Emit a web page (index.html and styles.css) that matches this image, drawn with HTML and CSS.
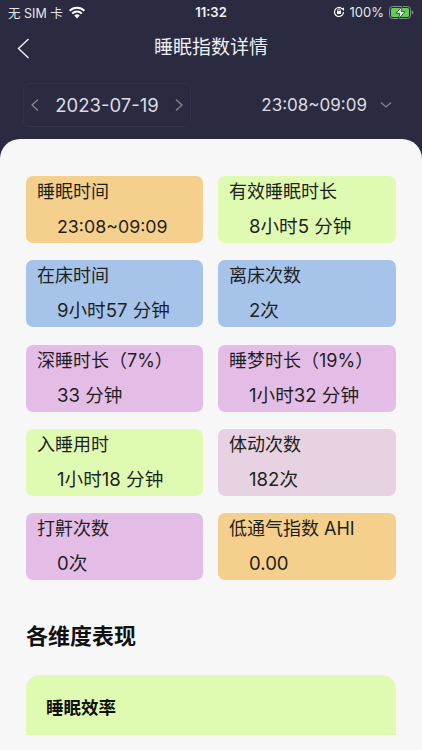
FILE: index.html
```html
<!DOCTYPE html>
<html lang="zh">
<head>
<meta charset="utf-8">
<title>睡眠指数详情</title>
<link rel="stylesheet" href="styles.css">
</head>
<body>
<div class="screen">
  <header class="top">
    <div class="status">
      <div class="status-left">
        <span>无 SIM 卡</span>
        <svg class="wifi" width="18" height="13" viewBox="0 0 18 13"><path d="M9 12.600 6.300 9.600a3.800 3.800 0 0 1 5.400 0Z" fill="#fff"/><path d="M4.200 7.600a6.800 6.800 0 0 1 9.600 0M1.600 4.800a10.500 10.500 0 0 1 14.800 0" fill="none" stroke="#fff" stroke-width="2"/></svg>
      </div>
      <span class="clock">11:32</span>
      <div class="status-right">
        <svg width="12" height="12" viewBox="0 0 12 12"><path d="M10.500 6a4.500 4.500 0 1 1-1.300-3.200" fill="none" stroke="#fff" stroke-width="1.200"/><path d="M8.200 2.800 11 1.500V5Z" fill="#fff"/><rect x="4" y="5" width="4" height="3" fill="#fff"/><path d="M4.800 5V4a1.200 1.200 0 0 1 2.400 0v1" fill="none" stroke="#fff" stroke-width=".8"/></svg>
        <span>100%</span>
        <svg width="25" height="13" viewBox="0 0 25 13"><rect x=".5" y=".5" width="21" height="12" rx="3" fill="none" stroke="#8a8b92"/><rect x="2" y="2" width="18" height="9" rx="1.500" fill="#5ed44e"/><path d="M22.800 4.500c1 .3 1.500 1 1.500 2s-.5 1.700-1.500 2Z" fill="#8a8b92"/><path d="M13.500 0 7 7.300h4L9.500 13 16 5.600h-4Z" fill="#fff" stroke="#2a2b40" stroke-width=".8"/></svg>
      </div>
    </div>
    <div class="nav">
      <svg class="back" width="13" height="21" viewBox="0 0 13 21"><path d="M11.500 1 1.500 10.500l10 9.500" fill="none" stroke="#f0f0f2" stroke-width="1.400"/></svg>
      <h1>睡眠指数详情</h1>
    </div>
    <div class="filters">
      <div class="date-box">
        <svg width="9" height="14" viewBox="0 0 9 14"><path d="M8 1.500 2 7l6 5.500" fill="none" stroke="#85868f" stroke-width="1.300"/></svg>
        <span>2023-07-19</span>
        <svg width="9" height="14" viewBox="0 0 9 14"><path d="M1 1.500 7 7l-6 5.500" fill="none" stroke="#85868f" stroke-width="1.300"/></svg>
      </div>
      <div class="range">
        <span>23:08~09:09</span>
        <svg width="12" height="8" viewBox="0 0 12 8"><path d="M1 1.500 6 6l5-4.500" fill="none" stroke="#85868f" stroke-width="1.200"/></svg>
      </div>
    </div>
  </header>
  <main class="panel">
    <section class="grid">
      <div class="stat orange"><div class="label">睡眠时间</div><div class="value time">23:08~09:09</div></div>
      <div class="stat green"><div class="label">有效睡眠时长</div><div class="value">8小时5 分钟</div></div>
      <div class="stat blue"><div class="label">在床时间</div><div class="value">9小时57 分钟</div></div>
      <div class="stat blue"><div class="label">离床次数</div><div class="value">2次</div></div>
      <div class="stat purple"><div class="label">深睡时长（7%）</div><div class="value">33 分钟</div></div>
      <div class="stat purple"><div class="label">睡梦时长（19%）</div><div class="value">1小时32 分钟</div></div>
      <div class="stat green"><div class="label">入睡用时</div><div class="value">1小时18 分钟</div></div>
      <div class="stat mauve"><div class="label">体动次数</div><div class="value">182次</div></div>
      <div class="stat purple"><div class="label">打鼾次数</div><div class="value">0次</div></div>
      <div class="stat orange"><div class="label">低通气指数 AHI</div><div class="value">0.00</div></div>
    </section>
    <h2>各维度表现</h2>
    <section class="dimension"><h3>睡眠效率</h3></section>
  </main>
</div>
</body>
</html>
```
FILE: styles.css
```css
* { box-sizing: border-box; margin: 0; padding: 0; }
html, body { width: 422px; height: 750px; overflow: hidden; }
body { background: #f7f7f8; font-family: Inter, "Noto Sans CJK SC", sans-serif; color: #1c1c1e; }
.screen { height: 750px; background: #2a2b40; display: flex; flex-direction: column; overflow: hidden; }
.top { height: 139px; flex: none; color: #eeeef0; }
.status { height: 24px; padding: 0 8px; display: grid; grid-template-columns: 1fr auto 1fr; align-items: center; font-size: 13px; }
.status-left { display: flex; align-items: center; gap: 5px; font-size: 12.500px; color: #e6e6ea; }
.status-right { display: flex; align-items: center; justify-content: flex-end; gap: 5px; font-size: 13px; color: #e6e6ea; }
.clock { font-weight: 600; font-size: 13px; color: #f2f2f4; }
.nav { height: 48px; position: relative; display: flex; align-items: center; justify-content: center; }
.back { position: absolute; left: 17px; top: 14px; }
h1 { font-size: 19px; font-weight: 400; line-height: 48px; color: #eeeef0; }
.filters { display: flex; justify-content: space-between; align-items: center; padding: 11px 30px 0 23px; }
.date-box { width: 168px; height: 44px; display: flex; align-items: center; justify-content: space-between; padding: 0 6px; border: 1px solid #32334a; border-radius: 6px; font-size: 18.500px; color: #dcdce0; }
.range { display: flex; align-items: center; gap: 13px; font-size: 17px; color: #dcdce0; }
.panel { flex: 1; background: #f7f7f8; border-radius: 20px 20px 0 0; padding: 37px 26px 0; display: flex; flex-direction: column; }
.grid { display: grid; grid-template-columns: 177px 178px; column-gap: 15px; row-gap: 17.250px; grid-auto-rows: 67px; }
.stat { border-radius: 7px; padding: 3px 11px 0; color: #1f1f1f; }
.label { font-size: 18px; line-height: 25px; }
.value { font-size: 18.600px; line-height: 25px; padding: 10px 0 0 20px; }
.value.time { font-size: 17.800px; }
.orange { background: #f4d08c; }
.green { background: #dffbb2; }
.blue { background: #a6c4ea; }
.purple { background: #e4bde6; }
.mauve { background: #e6d2e0; }
h2 { font-size: 22px; font-weight: 700; line-height: 30px; margin-top: 41px; color: #111; }
.dimension { margin-top: 24px; height: 60px; background: #dffbb2; border-radius: 14px 14px 0 0; padding: 21px 20px 0; }
h3 { font-size: 17.500px; font-weight: 700; line-height: 24px; color: #111; }
```
